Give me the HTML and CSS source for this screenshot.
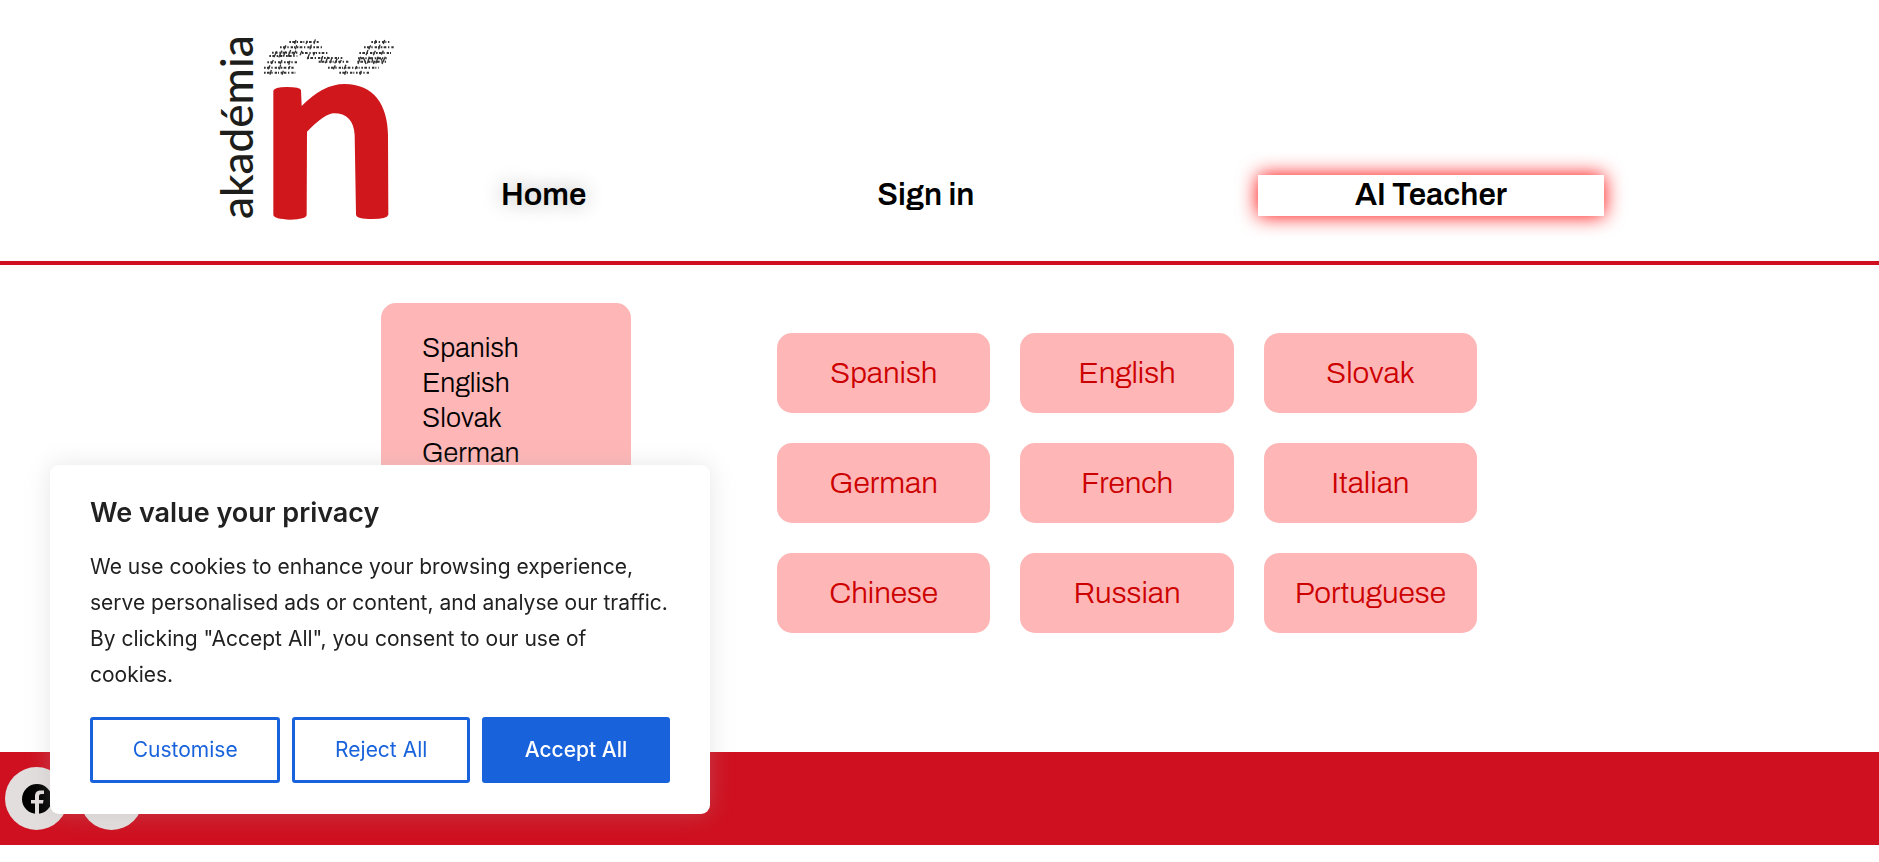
FILE: index.html
```html
<!DOCTYPE html>
<html lang="en">
<head>
    <meta charset="UTF-8">
    <meta name="viewport" content="width=device-width, initial-scale=1.0">
    <title>Akadémia</title>
    <link rel="stylesheet" href="styles.css">
</head>
<body>
    <header class="header">
        <a href="#" class="logo">
            <span class="logo-word">akadémia</span>
            <svg class="logo-mark" viewBox="186 45 402 561">
                <!-- tilde made of small lines of script -->
                <g class="logo-tilde">
                    <path d="M268 66H356M514 66H568"/>
                    <path d="M240 82H368M492 82H584"/>
                    <path d="M216 98H298M306 99H386M478 99H574"/>
                    <path d="M208 108H292M322 114H430M474 115H560"/>
                    <path d="M202 127H292M356 125H446M472 125H558"/>
                    <path d="M192 143H284M384 143H536"/>
                    <path d="M192 158H286M418 158H510"/>
                </g>
                <g class="logo-tilde logo-tilde-slant">
                    <path d="M222 112L230 94M236 112L246 92M250 108L258 94M264 110L272 90M280 106L288 92M300 106L306 92M322 118L328 102M340 106L346 96M362 128L368 108M376 130L384 110M390 130L396 112M404 130L412 116M418 130L424 120"/>
                    <path d="M474 132L482 110M490 112L498 132M502 130L508 110M514 112L522 132M528 130L534 110M540 112L546 122M546 132L556 110M498 106L504 90M520 106L526 92M544 104L550 92"/>
                    <path d="M284 72L288 60M318 72L322 62M342 72L346 58M252 88L258 76M286 88L290 76M330 88L334 74M524 72L528 60M550 72L554 60M506 88L512 76M536 88L540 74"/>
                    <path d="M214 132L220 120M240 132L246 120M266 134L270 122M204 148L210 136M238 148L242 134M266 148L270 138M210 164L214 150M246 164L250 152M400 148L406 136M432 148L438 134M466 148L470 138M434 164L438 152M480 164L484 152"/>
                </g>
                <path class="logo-n" d="M220 212Q222 202 260 201Q301 201 303 211L305 258Q370 192 433 192C522 192 563 255 564 345L565 584Q561 597 517 597Q470 597 468 584L464 345C462 302 440 280 402 280Q375 280 321 335L320 585Q318 598 270 599Q222 597 220 585Z"/>
            </svg>
        </a>
        <nav class="nav">
            <a href="#" class="nav-link active">Home</a>
            <a href="#" class="nav-link">Sign in</a>
            <a href="#" class="nav-link ai-link">AI Teacher</a>
        </nav>
    </header>

    <main class="main">
        <aside class="sidebar">
            <ul class="sidebar-list">
                <li><a href="#">Spanish</a></li>
                <li><a href="#">English</a></li>
                <li><a href="#">Slovak</a></li>
                <li><a href="#">German</a></li>
                <li><a href="#">French</a></li>
                <li><a href="#">Italian</a></li>
            </ul>
        </aside>
        <section class="languages">
            <a href="#" class="language">Spanish</a>
            <a href="#" class="language">English</a>
            <a href="#" class="language">Slovak</a>
            <a href="#" class="language">German</a>
            <a href="#" class="language">French</a>
            <a href="#" class="language">Italian</a>
            <a href="#" class="language">Chinese</a>
            <a href="#" class="language">Russian</a>
            <a href="#" class="language">Portuguese</a>
        </section>
    </main>

    <footer class="footer">
        <a href="#" class="social" aria-label="Facebook">
            <svg class="social-icon" viewBox="0 0 30 30">
                <circle cx="15" cy="15" r="15"/>
                <path class="social-mark" d="M13 30V19.500H9V16H13V12.500C13 8.500 15 6.500 18.500 6.500H22V10H19.500C17.500 10 17 11 17 12.500V16H21.500L21 19.500H17V30Z"/>
            </svg>
        </a>
        <a href="#" class="social" aria-label="Instagram"></a>
    </footer>

    <div class="cookies" role="dialog" aria-labelledby="cookies-title">
        <h2 class="cookies-title" id="cookies-title">We value your privacy</h2>
        <p class="cookies-text">We use cookies to enhance your browsing experience, serve personalised ads or content, and analyse our traffic. By clicking "Accept All", you consent to our use of cookies.</p>
        <div class="cookies-buttons">
            <button type="button" class="cookies-btn">Customise</button>
            <button type="button" class="cookies-btn">Reject All</button>
            <button type="button" class="cookies-btn accept">Accept All</button>
        </div>
    </div>
</body>
</html>
```
FILE: styles.css
```css
* {
    box-sizing: border-box;
}

body {
    margin: 0;
    font-family: Archivo, "Liberation Sans", Arial, sans-serif;
    background-color: #fff;
    color: #000;
}

a {
    color: inherit;
    text-decoration: none;
}

/* header */
.header {
    display: flex;
    align-items: flex-end;
    padding: 35px 220px 39px;
    border-bottom: 4px solid #cf1020;
}

.logo {
    display: flex;
    flex: none;
    gap: 10px;
}

/* reads from bottom to top */
.logo-word {
    padding-top: 3px;
    writing-mode: vertical-rl;
    transform: rotate(180deg);
    font-family: Lato, sans-serif;
    font-size: 44px;
    font-weight: 500;
    line-height: 32px;
    color: #1d1d1b;
}

.logo-mark {
    display: block;
    width: 134px;
    height: 187px;
}

.logo-tilde {
    fill: none;
    stroke: #333;
    stroke-width: 6;
    stroke-dasharray: 5 4 8 5 4 6 7 3 3 5;
}

.logo-tilde-slant {
    stroke-width: 4;
    stroke-dasharray: none;
}

.logo-n {
    fill: #cf171c;
}

.nav {
    display: flex;
    flex: 1;
    gap: 97px;
    margin: 0 55px 6px 8px;
}

.nav-link {
    padding: 0 97px;
    font-size: 31px;
    font-weight: 600;
    line-height: 41px;
    white-space: nowrap;
}

.nav-link.active {
    text-shadow: 0 0 20px rgba(0, 0, 0, 0.3);
}

.nav-link.ai-link {
    margin-left: auto;
    box-shadow: 0 0 20px #ff0000;
}

/* content */
.main {
    display: flex;
    align-items: flex-start;
    justify-content: center;
    gap: 146px;
    padding: 38px 21px 89px 0;
}

.sidebar {
    width: 250px;
    padding: 28px 41px;
    border-radius: 15px;
    background-color: #ffb6b6;
}

.sidebar-list {
    margin: 0;
    padding: 0;
    list-style: none;
    font-size: 27px;
    font-weight: 300;
    line-height: 35px;
}

.languages {
    display: grid;
    grid-template-columns: repeat(3, 1fr);
    gap: 30px;
    width: 700px;
    padding: 30px 0;
}

.language {
    padding: 20px 0;
    border-radius: 15px;
    background-color: #ffb6b6;
    color: #cc0000;
    font-size: 30px;
    font-weight: 300;
    line-height: 40px;
    text-align: center;
}

/* footer */
.footer {
    display: flex;
    gap: 12px;
    padding: 15px 5px;
    background-color: #cf1020;
}

.social {
    display: flex;
    align-items: center;
    justify-content: center;
    width: 63px;
    height: 63px;
    border-radius: 50%;
    background-color: #e2dedd;
}

.social-icon {
    width: 30px;
    height: 30px;
}

.social-mark {
    fill: #e2dedd;
}

/* cookie banner */
.cookies {
    position: fixed;
    left: 50px;
    bottom: 48px;
    width: 660px;
    padding: 30px 40px 31px;
    border-radius: 9px;
    background-color: #fff;
    box-shadow: 0 0 25px rgba(172, 171, 171, 0.3);
    color: #212121;
    font-family: Inter, sans-serif;
}

.cookies-title {
    margin: 0 0 18px;
    font-size: 27px;
    font-weight: 600;
    line-height: 36px;
}

.cookies-text {
    margin: 0 0 24px;
    font-size: 21px;
    line-height: 36px;
}

.cookies-buttons {
    display: flex;
    gap: 12px;
}

.cookies-btn {
    flex: auto;
    padding: 12px 30px;
    border: 3px solid #1863dc;
    border-radius: 3px;
    background-color: transparent;
    color: #1863dc;
    font-family: inherit;
    font-size: 21px;
    line-height: 36px;
    white-space: nowrap;
    cursor: pointer;
}

.cookies-btn.accept {
    background-color: #1863dc;
    color: #fff;
    font-weight: 500;
}
```
